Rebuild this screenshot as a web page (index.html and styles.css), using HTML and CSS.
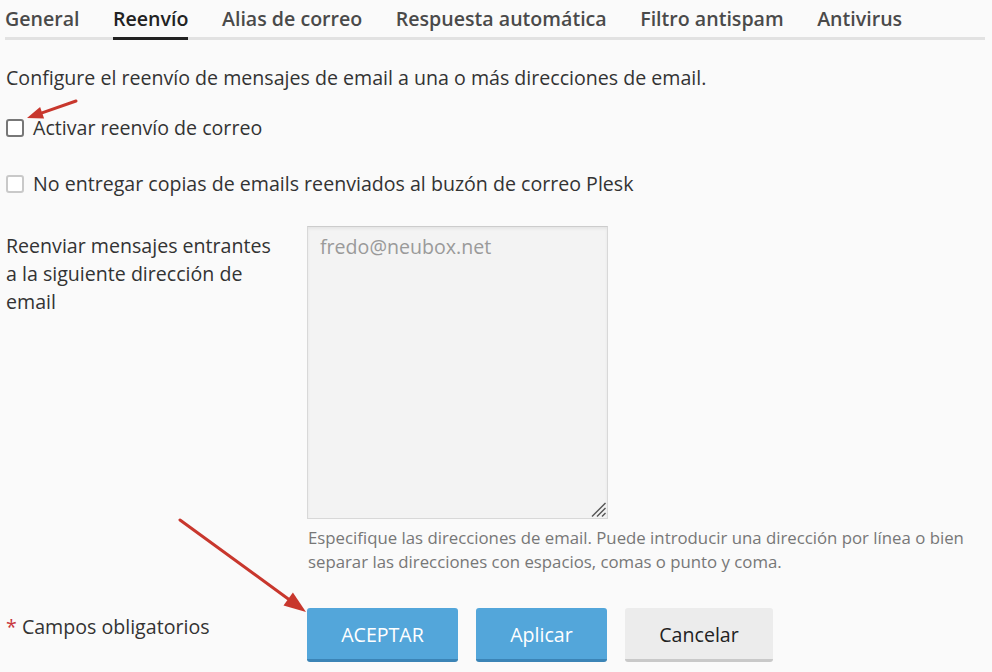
FILE: index.html
```html
<!DOCTYPE html>
<html lang="es">
<head>
<meta charset="utf-8">
<title>Reenvío</title>
<link rel="stylesheet" href="styles.css">
</head>
<body>
<div class="page">
  <nav class="tabs">
    <span class="tab">General</span>
    <span class="tab active">Reenvío</span>
    <span class="tab">Alias de correo</span>
    <span class="tab">Respuesta automática</span>
    <span class="tab">Filtro antispam</span>
    <span class="tab">Antivirus</span>
  </nav>

  <p class="intro">Configure el reenvío de mensajes de email a una o más direcciones de email.</p>

  <label class="check first"><span class="box dark"></span>Activar reenvío de correo</label>
  <label class="check second"><span class="box"></span>No entregar copias de emails reenviados al buzón de correo Plesk</label>

  <div class="form-row">
    <div class="field-label">Reenviar mensajes entrantes a la siguiente dirección de email</div>
    <div class="field">
      <div class="textarea-wrap">
        <textarea class="addresses" placeholder="fredo@neubox.net"></textarea>
        <svg class="grip" width="18" height="18" viewBox="0 0 18 18">
          <line x1="16.5" y1="3" x2="3" y2="16.5" stroke="#555" stroke-width="1.4"/>
          <line x1="16.5" y1="8" x2="8" y2="16.5" stroke="#555" stroke-width="1.4"/>
          <line x1="16.5" y1="13" x2="13" y2="16.5" stroke="#555" stroke-width="1.4"/>
        </svg>
      </div>
      <p class="hint">Especifique las direcciones de email. Puede introducir una dirección por línea o bien separar las direcciones con espacios, comas o punto y coma.</p>
    </div>
  </div>

  <div class="footer-row">
    <div class="required"><span class="star">*</span> Campos obligatorios</div>
    <div class="buttons">
      <button class="btn primary accept">ACEPTAR</button>
      <button class="btn primary apply">Aplicar</button>
      <button class="btn secondary cancel">Cancelar</button>
    </div>
  </div>
</div>

<svg class="annotations" width="992" height="672" viewBox="0 0 992 672">
  <line x1="76" y1="101" x2="42" y2="112.8" stroke="#c8372d" stroke-width="3" stroke-linecap="round"/>
  <polygon points="27,118 44.1,118.5 40.1,107.1" fill="#c8372d"/>
  <line x1="180" y1="520" x2="289" y2="599.5" stroke="#c8372d" stroke-width="3" stroke-linecap="round"/>
  <polygon points="306,612 283.5,605.5 292.9,592.5" fill="#c8372d"/>
</svg>
</body>
</html>
```

FILE: styles.css
```css
html, body {
  margin: 0;
  padding: 0;
  background: #fafafa;
}
body {
  font-family: "Open Sans", "Noto Sans", sans-serif;
  font-size: 19.6px;
  line-height: 28px;
  color: #333;
  width: 992px;
  height: 672px;
  overflow: hidden;
  position: relative;
}
.page {
  padding: 0 7px 0 6px;
}
.tabs {
  display: flex;
  gap: 33.5px;
  border-bottom: 3px solid #e2e2e2;
  margin-left: -1px;
  padding-left: 0;
}
.tab {
  font-weight: 600;
  color: #4a4a4a;
  padding: 5px 0 4px;
  margin-bottom: -3px;
  border-bottom: 3px solid transparent;
}
.tab.active {
  color: #222;
  border-bottom-color: #222;
}
.intro {
  margin: 24px 0 0;
}
.check {
  display: flex;
  align-items: center;
  gap: 9px;
}
.check.first { margin-top: 22px; }
.check.second { margin-top: 28px; }
.box {
  width: 18px;
  height: 18px;
  box-sizing: border-box;
  border: 2px solid #c9c9c9;
  border-radius: 3px;
  background: #fff;
}
.box.dark {
  border-color: #777;
}
.form-row {
  display: flex;
  margin-top: 28px;
}
.field-label {
  width: 275px;
  margin-right: 26px;
  padding-top: 6px;
}
.textarea-wrap {
  position: relative;
  width: 301px;
  height: 293px;
}
.addresses {
  display: block;
  width: 301px;
  height: 293px;
  box-sizing: border-box;
  margin: 0;
  padding: 6px 12px;
  border: 1px solid #d8d8d8;
  border-top-color: #cccccc;
  border-radius: 0;
  background: #f3f3f3;
  box-shadow: inset 0 2px 3px rgba(0, 0, 0, 0.06);
  font-family: "Open Sans", "Noto Sans", sans-serif;
  font-size: 19.6px;
  line-height: 28px;
  color: #333;
  resize: none;
  outline: none;
}
.addresses::placeholder {
  color: #9a9a9a;
}
.grip {
  position: absolute;
  right: 1px;
  bottom: 1px;
  pointer-events: none;
}
.hint {
  margin: 7px 0 0 1px;
  width: 668px;
  font-size: 16.8px;
  line-height: 24px;
  color: #777;
}
.footer-row {
  display: flex;
  margin-top: 34px;
}
.required {
  width: 301px;
  padding-top: 5px;
}
.star {
  color: #c8373d;
}
.buttons {
  display: flex;
  gap: 18px;
}
.btn {
  font-family: "Open Sans", "Noto Sans", sans-serif;
  font-size: 19.6px;
  line-height: 28px;
  height: 54px;
  box-sizing: border-box;
  padding: 12px 0 10px;
  border: none;
  border-radius: 3px;
  text-align: center;
}
.btn.primary {
  background: #53a6da;
  border-bottom: 3px solid #3b84b6;
  color: #fff;
}
.btn.secondary {
  background: #ececec;
  border-bottom: 3px solid #c9c9c9;
  color: #222;
}
.accept { width: 151px; }
.apply { width: 131px; }
.cancel { width: 148px; }
.annotations {
  position: absolute;
  left: 0;
  top: 0;
  pointer-events: none;
}
```
